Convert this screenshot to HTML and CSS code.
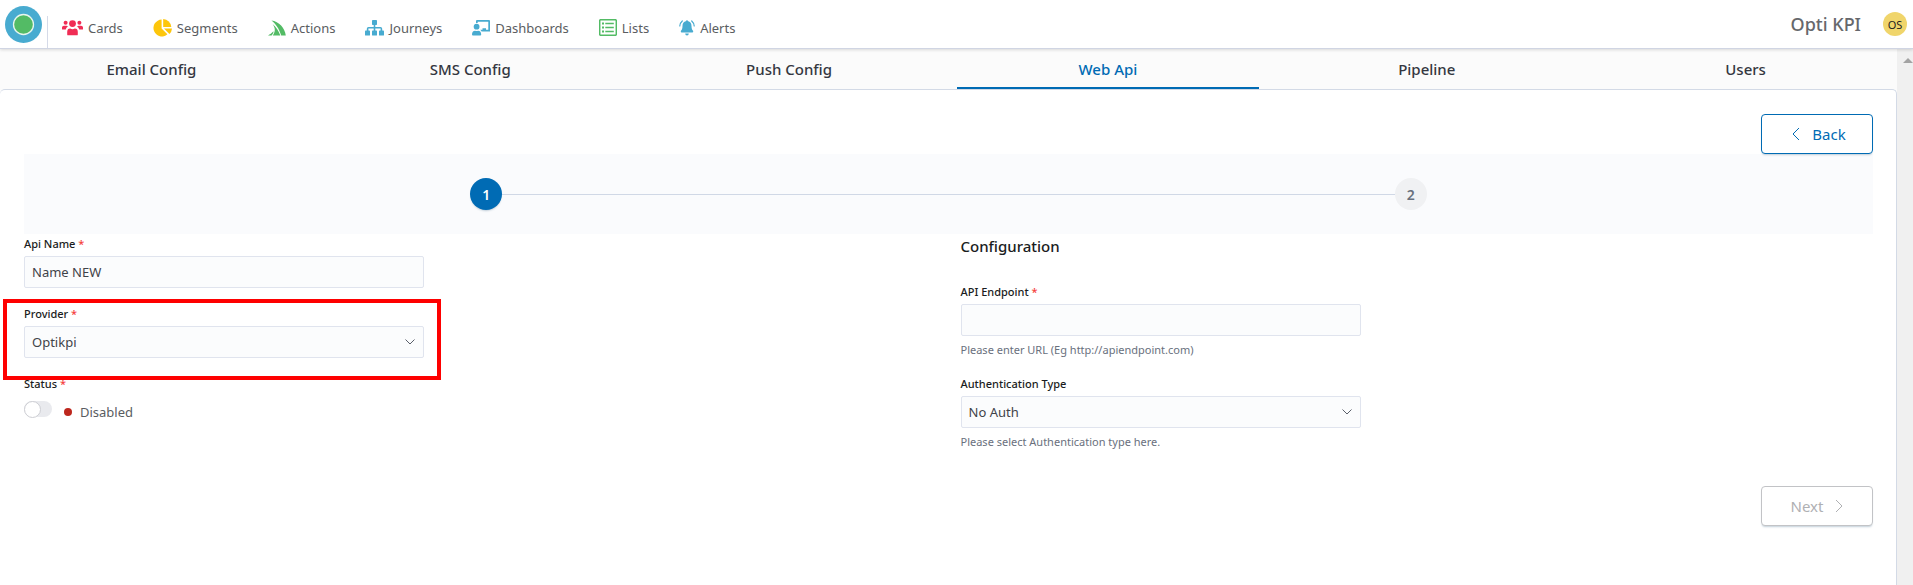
FILE: index.html
```html
<!DOCTYPE html>
<html lang="en">
<head>
<meta charset="utf-8">
<title>Opti KPI - Web Api</title>
<link rel="stylesheet" href="styles.css">
</head>
<body>
<header class="topbar">
  <a class="logo" href="#" aria-label="Home">
    <svg width="37" height="37" viewBox="0 0 37 37"><circle cx="18.500" cy="18.500" r="18.500" fill="#48abd0"/><circle cx="18.500" cy="18.500" r="10" fill="#53bb65" stroke="#e8f5ee" stroke-width="1.300"/></svg>
  </a>
  <nav class="menu">
    <a class="menu-item" href="#"><svg width="21" height="16" viewBox="0 0 21 16" fill="#f02d55"><circle cx="10.500" cy="3.600" r="3.400"/><circle cx="3.600" cy="2.800" r="2"/><circle cx="17.400" cy="2.800" r="2"/><path d="M5.200 14.400V12Q5.200 8.600 8.200 8.600Q10.500 9.800 12.800 8.600Q15.800 8.600 15.800 12V14.400Q15.800 15.300 14.900 15.300H6.100Q5.200 15.300 5.200 14.400ZM0 9V7.600Q0 5.800 2 5.800H4.400Q5.300 5.800 5.900 6.400Q4.200 7.400 3.700 9.500H.5Q0 9.500 0 9ZM21 9V7.600Q21 5.800 19 5.800H16.600Q15.700 5.800 15.100 6.400Q16.800 7.400 17.300 9.500H20.500Q21 9.500 21 9Z"/></svg>Cards</a>
    <a class="menu-item" href="#"><svg width="19" height="18" viewBox="0 0 19 18" fill="#fdc60b"><path d="M8.600 .6V9.400L14.400 15.300A8.400 8.400 0 1 1 8.600 .6Z"/><path d="M10.200 0A8.500 8.500 0 0 1 18.300 8H10.200Z"/><path d="M11 9.600H19A8.500 8.500 0 0 1 16.400 15.100Z"/></svg>Segments</a>
    <a class="menu-item" href="#"><svg width="18" height="16" viewBox="0 0 18 16" fill="#53bb65"><path d="M3.400 .5C11 1.500 17 8 17.800 15.500H13.200C11 8.500 7.800 4 3.400 .5Z"/><path d="M4.600 4C8.200 7.400 10.800 11 12.300 15.500H4.800C7.600 11.600 7.400 8 4.600 4Z"/><path d="M5.500 11.300C5.500 13 4.700 14.500 3.600 15.500H0C2 14.400 3.600 13.200 5.500 11.300Z"/></svg>Actions</a>
    <a class="menu-item" href="#"><svg width="19" height="16" viewBox="0 0 19 16" fill="#48abd0"><rect x="7" y="0" width="5" height="5" rx=".7"/><path d="M8.700 4H10.300V7H15.500Q17.200 7 17.200 8.700V11H15.600V8.600H10.300V11H8.700V8.600H3.400V11H1.800V8.700Q1.800 7 3.500 7H8.700Z"/><rect x="0" y="10.600" width="5" height="5" rx=".7"/><rect x="7" y="10.600" width="5" height="5" rx=".7"/><rect x="14" y="10.600" width="5" height="5" rx=".7"/></svg>Journeys</a>
    <a class="menu-item" href="#"><svg width="18" height="16" viewBox="0 0 18 16" fill="#48abd0"><path d="M4 3V1Q4 0 5 0H17Q18 0 18 1V11.400H9.600L8.300 9.800H10.500V8.300H14V9.800H16.300V1.700H5.700V3Z"/><circle cx="4.600" cy="6.700" r="2.900"/><path d="M0 14.600Q0 10.800 3.200 10.800Q4.600 11.400 6 10.800Q9.200 10.800 9.200 14.600Q9.200 15.500 8.300 15.500H.9Q0 15.500 0 14.600Z"/></svg>Dashboards</a>
    <a class="menu-item" href="#"><svg width="18" height="17" viewBox="0 0 18 17" fill="none" stroke="#53bb65" stroke-width="1.500"><rect x=".7" y=".7" width="16.600" height="15.600" rx="1"/><path d="M6.300 4.500H14.800M6.300 8.500H14.800M6.300 12.500H14.800"/><path d="M3 4.500H5M3 8.500H5M3 12.500H5" stroke-width="2"/></svg>Lists</a>
    <a class="menu-item" href="#"><svg width="16" height="16" viewBox="0 0 16 16" fill="#48abd0"><path d="M7.300 1V.5Q8 -.3 8.700 .5V1C11.500 1.500 12.500 3.500 12.500 6C12.500 9 13.300 9.800 14 10.800C14.500 11.700 14 12.500 13 12.500H3C2 12.500 1.500 11.700 2 10.800C2.700 9.800 3.500 9 3.500 6C3.500 3.500 4.500 1.500 7.300 1Z"/><path d="M6.200 13.500H9.800A1.800 2 0 0 1 6.200 13.500Z"/><path d="M3.300 1Q1 3 .8 6M12.700 1Q15 3 15.200 6" fill="none" stroke="#48abd0" stroke-width="1.200" stroke-linecap="round"/></svg>Alerts</a>
  </nav>
  <span class="account">Opti KPI</span>
  <button class="avatar" type="button">OS</button>
</header>
<div class="viewport">
  <div class="page">
    <nav class="tabs">
      <a class="tab" href="#">Email Config</a>
      <a class="tab" href="#">SMS Config</a>
      <a class="tab" href="#">Push Config</a>
      <a class="tab tab-active" href="#">Web Api</a>
      <a class="tab" href="#">Pipeline</a>
      <a class="tab" href="#">Users</a>
    </nav>
    <main class="panel">
      <div class="actions">
        <button class="btn btn-back" type="button"><svg class="chevron" width="8" height="14" viewBox="0 0 8 14"><path d="M7 1L1 7L7 13"/></svg>Back</button>
      </div>
      <ol class="stepper">
        <li class="step step-current"><span class="step-dot">1</span></li>
        <li class="step"><span class="step-dot">2</span></li>
      </ol>
      <form class="form">
        <section class="column">
          <div class="field">
            <label class="label" for="name">Api Name <span class="required">*</span></label>
            <input class="control" id="name" type="text" value="Name NEW">
          </div>
          <div class="field field-marked">
            <label class="label" for="provider">Provider <span class="required">*</span></label>
            <div class="select">
              <select class="control" id="provider"><option>Optikpi</option></select>
              <svg class="caret" width="10" height="6" viewBox="0 0 10 6"><path d="M.5 .5L5 5L9.500 .5"/></svg>
            </div>
          </div>
          <div class="field">
            <label class="label" for="status">Status <span class="required">*</span></label>
            <div class="status">
              <input class="toggle" id="status" type="checkbox" role="switch">
              <span class="status-dot"></span>
              <span class="status-text">Disabled</span>
            </div>
          </div>
        </section>
        <section class="column column-config">
          <h2 class="heading">Configuration</h2>
          <div class="field">
            <label class="label" for="endpoint">API Endpoint <span class="required">*</span></label>
            <input class="control" id="endpoint" type="text">
            <p class="help">Please enter URL (Eg http://apiendpoint.com)</p>
          </div>
          <div class="field">
            <label class="label" for="auth">Authentication Type</label>
            <div class="select">
              <select class="control" id="auth"><option>No Auth</option></select>
              <svg class="caret" width="10" height="6" viewBox="0 0 10 6"><path d="M.5 .5L5 5L9.500 .5"/></svg>
            </div>
            <p class="help">Please select Authentication type here.</p>
          </div>
        </section>
      </form>
      <div class="actions actions-next">
        <button class="btn btn-next" type="button" disabled>Next<svg class="chevron" width="8" height="14" viewBox="0 0 8 14"><path d="M1 1L7 7L1 13"/></svg></button>
      </div>
    </main>
  </div>
  <div class="scroll-track"><span class="scroll-up"></span></div>
</div>
</body>
</html>
```

FILE: styles.css
```css
* { box-sizing: border-box; }

body {
  margin: 0;
  min-height: 100vh;
  display: flex;
  flex-direction: column;
  font-family: "Noto Sans", "Open Sans", sans-serif;
  font-size: 13px;
  color: #3f4349;
  background: #fff;
}

a { color: inherit; text-decoration: none; }
button, input, select { font: inherit; }

.topbar {
  position: relative;
  z-index: 1;
  display: flex;
  align-items: center;
  height: 49px;
  padding: 0 6px 0 5px;
  border-bottom: 1px solid #d0d5e3;
  box-shadow: 0 1px 3px rgba(0, 0, 0, 0.14);
  background: #fff;
}
.logo { display: flex; }
.menu {
  display: flex;
  align-items: center;
  gap: 30px;
  height: 32px;
  margin: 16px auto 0 5px;
  padding-left: 14px;
  border-left: 1px solid #d5dae8;
}
.menu-item {
  display: flex;
  align-items: center;
  gap: 5px;
  height: 22px;
  margin-bottom: 9px;
  color: #5a5d61;
}
.account {
  margin-right: 22px;
  font-size: 18px;
  font-weight: 500;
  color: #66686c;
}
.avatar {
  width: 24px;
  height: 24px;
  padding: 0;
  border: 0;
  border-radius: 50%;
  background: #f0d56b;
  color: #222;
  font-size: 11px;
}

.viewport { flex: 1; display: flex; }
.page {
  flex: 1;
  min-width: 0;
  display: flex;
  flex-direction: column;
  background: #fbfbfb;
}
.scroll-track {
  flex: 0 0 15px;
  display: flex;
  justify-content: center;
  padding: 9px 0 0 6px;
  background: #f0f0f0;
}
.scroll-up {
  width: 0;
  height: 0;
  border: 5px solid transparent;
  border-top: 0;
  border-bottom-color: #a3a3a3;
}

.tabs {
  display: grid;
  grid-template-columns: repeat(6, 1fr);
  gap: 16px;
  height: 40px;
}
.tab {
  display: flex;
  align-items: center;
  justify-content: center;
  padding-top: 2px;
  border-bottom: 2px solid transparent;
  font-size: 15px;
  font-weight: 500;
  color: #343741;
}
.tab-active { color: #006bb4; border-bottom-color: #006bb4; }

.panel {
  flex: 1;
  padding: 24px;
  padding-right: 23px;
  border-top: 1px solid #d3dae6;
  border-right: 1px solid #d3dae6;
  border-radius: 5px 5px 0 0;
  background: #fff;
}
.actions { display: flex; justify-content: flex-end; }
.actions-next { margin-top: 34px; }
.btn {
  display: flex;
  align-items: center;
  justify-content: center;
  gap: 12px;
  width: 112px;
  height: 40px;
  padding: 0;
  border: 1px solid;
  border-radius: 4px;
  background: #fff;
  font-size: 15px;
  box-shadow: 0 2px 2px -1px rgba(54, 97, 126, 0.3);
}
.btn-back { padding-left: 4px; color: #006bb4; }
.btn-next { color: #afb0b3; border-color: #c2c3c6; }
.chevron { fill: none; stroke: currentColor; }

.stepper {
  display: flex;
  margin: 0;
  padding: 24px 0;
  list-style: none;
  background: #fafbfd;
}
.step {
  flex: 1;
  display: flex;
  align-items: center;
}
.step::before, .step::after {
  content: "";
  flex: 1;
  height: 1px;
  background: #d0d8e6;
}
.step:first-child::before, .step:last-child::after { background: none; }
.step-dot {
  display: flex;
  align-items: center;
  justify-content: center;
  width: 32px;
  height: 32px;
  border-radius: 50%;
  background: #f0f1f3;
  color: #69707d;
  font-size: 14px;
  font-weight: 600;
}
.step-current .step-dot {
  background: #006bb4;
  color: #fff;
  box-shadow: 0 2px 2px -1px rgba(54, 97, 126, 0.3);
}

.form { display: grid; grid-template-columns: 1fr 1fr; }
.column {
  display: flex;
  flex-direction: column;
  gap: 16px;
}
.column-config { padding-left: 12px; gap: 14px; }
.heading {
  margin: 0 0 10px;
  font-size: 15px;
  font-weight: 500;
  line-height: 24px;
  color: #1a1c21;
}
.field {
  position: relative;
  width: 100%;
  max-width: 400px;
}
.label {
  display: block;
  margin-bottom: 2px;
  font-size: 11px;
  font-weight: 500;
  line-height: 20px;
  color: #1a1c21;
}
.required { color: #f5413c; }
.control {
  display: block;
  width: 100%;
  height: 32px;
  padding: 0 7px;
  border: 1px solid #e0e4ee;
  border-radius: 2px;
  background: #fbfcfd;
  color: #3f4349;
  appearance: none;
}
.select { position: relative; }
.caret {
  position: absolute;
  top: 13px;
  right: 9px;
  fill: none;
  stroke: #5a5f6a;
  pointer-events: none;
}
.help {
  margin: 4px 0 0;
  font-size: 11px;
  line-height: 20px;
  color: #69707d;
}

/* Highlight frame around the provider field */
.field-marked::after {
  content: "";
  position: absolute;
  z-index: 1;
  inset: -5px -17px -22px -21px;
  border: 4px solid #fe0000;
  pointer-events: none;
}

.status {
  display: flex;
  align-items: center;
  height: 32px;
}
.toggle {
  display: flex;
  align-items: center;
  width: 28px;
  height: 16px;
  margin: 0 12px 6px 0;
  border-radius: 8px;
  background: #e9eaee;
  appearance: none;
}
.toggle::before {
  content: "";
  width: 15px;
  height: 15px;
  border: 1px solid #cdced3;
  border-radius: 50%;
  background: #fff;
}
.status-dot {
  width: 8px;
  height: 8px;
  margin-right: 8px;
  border-radius: 50%;
  background: #bd271e;
}
.status-text { color: #5a5d61; }
```
